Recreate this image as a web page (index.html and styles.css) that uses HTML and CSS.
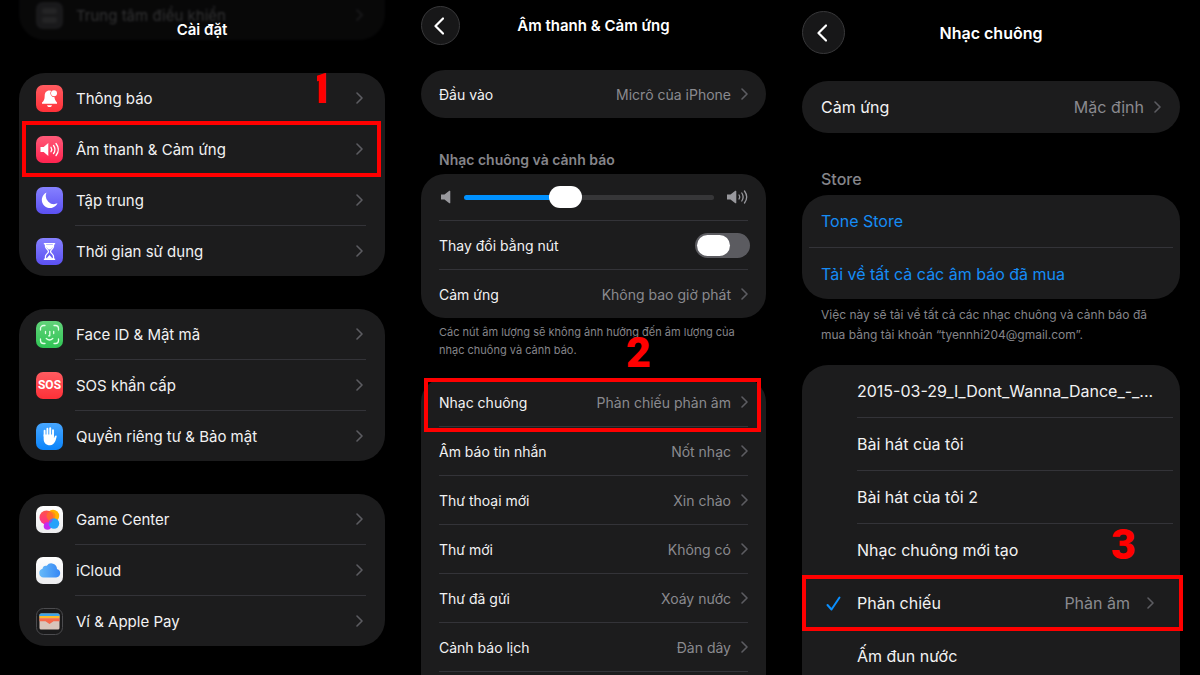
FILE: index.html
```html
<!DOCTYPE html>
<html lang="vi">
<head>
    <meta charset="UTF-8">
    <meta name="viewport" content="width=device-width, initial-scale=1.0">
    <title>Cài đặt nhạc chuông</title>
    <link rel="stylesheet" href="styles.css">
</head>
<body>
    <!-- shared icons -->
    <svg class="defs" aria-hidden="true">
        <symbol id="chevron" viewBox="0 0 7 12"><path d="M1 1l5 5-5 5" fill="none" stroke="currentColor" stroke-width="1.6" stroke-linecap="round" stroke-linejoin="round"/></symbol>
        <symbol id="back" viewBox="0 0 10 18"><path d="M9 1.5L1.5 9 9 16.500" fill="none" stroke="#fff" stroke-width="2.200" stroke-linecap="round" stroke-linejoin="round"/></symbol>
        <symbol id="check" viewBox="0 0 15 15"><path d="M1.500 9l4 4.500L13.500 1.500" fill="none" stroke="currentColor" stroke-width="2" stroke-linecap="round" stroke-linejoin="round"/></symbol>
        <linearGradient id="pinkred" x2="0" y2="1"><stop stop-color="#ff5b60"/><stop offset="1" stop-color="#ff3038"/></linearGradient>
        <linearGradient id="pink" x2="0" y2="1"><stop stop-color="#ff5a78"/><stop offset="1" stop-color="#ff234f"/></linearGradient>
        <linearGradient id="violet" x2="0" y2="1"><stop stop-color="#8681ff"/><stop offset="1" stop-color="#5b50f2"/></linearGradient>
        <linearGradient id="green" x2="0" y2="1"><stop stop-color="#62d37a"/><stop offset="1" stop-color="#2fc454"/></linearGradient>
        <linearGradient id="blue" x2="0" y2="1"><stop stop-color="#47a6ff"/><stop offset="1" stop-color="#0a84fb"/></linearGradient>
        <linearGradient id="white" x2="0" y2="1"><stop stop-color="#fff"/><stop offset="1" stop-color="#ececee"/></linearGradient>
        <linearGradient id="cloud" x2="1" y2="0"><stop stop-color="#67baf8"/><stop offset="1" stop-color="#3687f5"/></linearGradient>
        <linearGradient id="bubble" x1="0" y1="0" x2="0" y2="1"><stop stop-color="#ff5548"/><stop offset="1" stop-color="#ff2d92"/></linearGradient>
    </svg>

    <main class="screens">
        <section class="screen settings">
            <div class="ghost" aria-hidden="true">
                <svg class="icon" viewBox="0 0 27 27"><rect width="27" height="27" rx="7" fill="#55555a"/><rect x="6" y="6" width="15" height="6" rx="3" fill="#77777b"/><rect x="6" y="15" width="15" height="6" rx="3" fill="#77777b"/></svg>
                <span class="name">Trung tâm điều khiển</span>
                <svg class="chevron"><use href="#chevron"/></svg>
            </div>
            <header class="bar"><h1>Cài đặt</h1></header>

            <nav class="card">
                <a class="row" href="#">
                    <svg class="icon" viewBox="0 0 27 27"><rect width="27" height="27" rx="7" fill="url(#pinkred)"/><path d="M13.500 5.500c-3.300 0-4.800 2.300-4.800 5.200 0 3.800-1 5.300-2.700 6.900v1.100h15v-1.100c-1.600-1.600-2.300-3.200-2.500-5.300a4.200 4.200 0 0 1-3.400-6.600z" fill="#fff"/><circle cx="18" cy="8.300" r="3" fill="#fff"/><path d="M11 20.200h5c-.4 1.300-1.300 1.900-2.500 1.900s-2.100-.6-2.500-1.900z" fill="#fff"/></svg>
                    <span class="name">Thông báo</span>
                    <svg class="chevron"><use href="#chevron"/></svg>
                </a>
                <a class="row marked" href="#">
                    <svg class="icon" viewBox="0 0 27 27"><rect width="27" height="27" rx="7" fill="url(#pink)"/><path d="M4.500 11h3.200L12.300 7v13l-4.600-4H4.500z" fill="#fff"/><path d="M15 11.300c.9 1.300.9 3.100 0 4.400M17.500 9.500c1.800 2.400 1.800 5.600 0 8M20 7.500c2.900 3.700 2.900 8.300 0 12" fill="none" stroke="#fff" stroke-width="1.300" stroke-linecap="round"/></svg>
                    <span class="name">Âm thanh &amp; Cảm ứng</span>
                    <svg class="chevron"><use href="#chevron"/></svg>
                </a>
                <a class="row" href="#">
                    <svg class="icon" viewBox="0 0 27 27"><rect width="27" height="27" rx="7" fill="url(#violet)"/><path d="M10.500 5.500a8.200 8.200 0 1 0 11 10.800A8.300 8.300 0 0 1 10.500 5.500z" fill="#fff"/></svg>
                    <span class="name">Tập trung</span>
                    <svg class="chevron"><use href="#chevron"/></svg>
                </a>
                <a class="row" href="#">
                    <svg class="icon" viewBox="0 0 27 27"><rect width="27" height="27" rx="7" fill="url(#violet)"/><path d="M8.500 5.800h10M8.500 21.200h10" stroke="#fff" stroke-width="1.600" stroke-linecap="round"/><path d="M9.500 6v2.500c0 2.300 3 3.300 3 5s-3 2.700-3 5V21h8v-2.500c0-2.300-3-3.300-3-5s3-2.700 3-5V6" fill="none" stroke="#fff" stroke-width="1.300"/><path d="M10 7h7v2l-2.500 2.500h-2L10 9zM10.500 20.500l3-3.500 3 3.500z" fill="#fff"/></svg>
                    <span class="name">Thời gian sử dụng</span>
                    <svg class="chevron"><use href="#chevron"/></svg>
                </a>
            </nav>

            <nav class="card">
                <a class="row" href="#">
                    <svg class="icon" viewBox="0 0 27 27"><rect width="27" height="27" rx="7" fill="url(#green)"/><g fill="none" stroke="#e4ffe9" stroke-width="1.300" stroke-linecap="round" stroke-linejoin="round"><path d="M4.500 9V7.500a3 3 0 0 1 3-3H9M18 4.500h1.500a3 3 0 0 1 3 3V9M22.500 18v1.500a3 3 0 0 1-3 3H18M9 22.500H7.500a3 3 0 0 1-3-3V18M9.500 10.500v2M17.700 10.500v2M13.800 10.500v4.300h-1.200M10.300 17.500c1.900 1.700 4.600 1.700 6.500 0"/></g></svg>
                    <span class="name">Face ID &amp; Mật mã</span>
                    <svg class="chevron"><use href="#chevron"/></svg>
                </a>
                <a class="row" href="#">
                    <span class="icon sos">SOS</span>
                    <span class="name">SOS khẩn cấp</span>
                    <svg class="chevron"><use href="#chevron"/></svg>
                </a>
                <a class="row" href="#">
                    <svg class="icon" viewBox="0 0 27 27"><rect width="27" height="27" rx="7" fill="url(#blue)"/><path d="M8.600 13V7.800M11.400 12V5.800M14.200 12V5.300M17 13V7.300" stroke="#fff" stroke-width="1.900" stroke-linecap="round"/><path d="M7.650 11.500h10.300v3.800l1-2.200c.5-1 2-.7 1.700.5-.7 3.500-2 8.600-6.600 8.600-4.200 0-6.400-2.500-6.400-6.500z" fill="#fff"/></svg>
                    <span class="name">Quyền riêng tư &amp; Bảo mật</span>
                    <svg class="chevron"><use href="#chevron"/></svg>
                </a>
            </nav>

            <nav class="card">
                <a class="row" href="#">
                    <svg class="icon" viewBox="0 0 27 27"><rect width="27" height="27" rx="7" fill="url(#white)"/><circle cx="17" cy="10" r="6.200" fill="#ffb300"/><circle cx="10.500" cy="11.500" r="7" fill="url(#bubble)"/><circle cx="15" cy="10" r="4.500" fill="#ff7a1c" opacity=".7"/><circle cx="11.500" cy="20" r="3.800" fill="#c32bf0"/><circle cx="18" cy="17.500" r="5.200" fill="#27a2fa"/><path d="M13 16a5.200 5.200 0 0 1 4-3.500 7 7 0 0 1-4 5.500z" fill="#7b60e8"/></svg>
                    <span class="name">Game Center</span>
                    <svg class="chevron"><use href="#chevron"/></svg>
                </a>
                <a class="row" href="#">
                    <svg class="icon" viewBox="0 0 27 27"><rect width="27" height="27" rx="7" fill="url(#white)"/><path d="M7.500 20.500a4.500 4.500 0 0 1-1-8.800 3.600 3.600 0 0 1 4.300-2.900 5.600 5.600 0 0 1 10.200 3.100 4.400 4.400 0 0 1-.8 8.600z" fill="url(#cloud)"/></svg>
                    <span class="name">iCloud</span>
                    <svg class="chevron"><use href="#chevron"/></svg>
                </a>
                <a class="row" href="#">
                    <svg class="icon" viewBox="0 0 27 27"><rect x=".5" y=".5" width="26" height="26" rx="7" fill="#1a1a1b" stroke="#4b4b4e"/><rect x="3.500" y="5.500" width="20" height="16" rx="1.500" fill="#d9c5bb"/><path d="M3.500 7a1.500 1.500 0 0 1 1.500-1.500h17A1.500 1.500 0 0 1 23.500 7v1h-20z" fill="#3ba3e8"/><path d="M3.500 8h20v2.300h-20z" fill="#fcb827"/><path d="M3.500 10.300h20v3h-6l-4 2.700-4-2.700h-6z" fill="#f5694c"/></svg>
                    <span class="name">Ví &amp; Apple Pay</span>
                    <svg class="chevron"><use href="#chevron"/></svg>
                </a>
            </nav>
            <span class="step step-1">1</span>
        </section>

        <section class="screen sounds">
            <header class="bar">
                <button class="back" type="button" aria-label="Quay lại"><svg><use href="#back"/></svg></button>
                <h1>Âm thanh &amp; Cảm ứng</h1>
            </header>

            <nav class="card">
                <a class="row" href="#"><span class="name">Đầu vào</span><span class="value">Micrô của iPhone</span><svg class="chevron"><use href="#chevron"/></svg></a>
            </nav>

            <h2 id="volume-title">Nhạc chuông và cảnh báo</h2>
            <div class="card">
                <div class="row volume">
                    <svg class="mute" viewBox="0 0 10 14"><path d="M0 4.500h3.500L8.300.8q1-.5 1 .5v11.400q0 1-1 .5L3.500 9.500H0z" fill="#98989d"/></svg>
                    <input class="slider" type="range" min="0" max="100" value="39" aria-labelledby="volume-title">
                    <svg class="loud" viewBox="0 0 21 14"><path d="M0 4.500h3.500L8.300.8q1-.5 1 .5v11.400q0 1-1 .5L3.500 9.500H0z" fill="#98989d"/><path d="M12 5c.8 1.200.8 2.800 0 4M14.800 3c1.600 2.400 1.600 5.600 0 8M17.500 1c2.700 3.700 2.700 8.300 0 12" fill="none" stroke="#98989d" stroke-width="1.300" stroke-linecap="round"/></svg>
                </div>
                <div class="row">
                    <label class="name" for="by-button">Thay đổi bằng nút</label>
                    <input class="switch" type="checkbox" id="by-button">
                </div>
                <a class="row" href="#"><span class="name">Cảm ứng</span><span class="value">Không bao giờ phát</span><svg class="chevron"><use href="#chevron"/></svg></a>
            </div>
            <p class="note">Các nút âm lượng sẽ không ảnh hưởng đến âm lượng của nhạc chuông và cảnh báo.</p>

            <nav class="card">
                <a class="row marked" href="#"><span class="name">Nhạc chuông</span><span class="value">Phản chiếu phản âm</span><svg class="chevron"><use href="#chevron"/></svg></a>
                <a class="row" href="#"><span class="name">Âm báo tin nhắn</span><span class="value">Nốt nhạc</span><svg class="chevron"><use href="#chevron"/></svg></a>
                <a class="row" href="#"><span class="name">Thư thoại mới</span><span class="value">Xin chào</span><svg class="chevron"><use href="#chevron"/></svg></a>
                <a class="row" href="#"><span class="name">Thư mới</span><span class="value">Không có</span><svg class="chevron"><use href="#chevron"/></svg></a>
                <a class="row" href="#"><span class="name">Thư đã gửi</span><span class="value">Xoáy nước</span><svg class="chevron"><use href="#chevron"/></svg></a>
                <a class="row" href="#"><span class="name">Cảnh báo lịch</span><span class="value">Đàn dây</span><svg class="chevron"><use href="#chevron"/></svg></a>
                <div class="row"></div>
            </nav>
            <span class="step step-2">2</span>
        </section>

        <section class="screen ringtone">
            <header class="bar">
                <button class="back" type="button" aria-label="Quay lại"><svg><use href="#back"/></svg></button>
                <h1>Nhạc chuông</h1>
            </header>

            <nav class="card">
                <a class="row" href="#"><span class="name">Cảm ứng</span><span class="value">Mặc định</span><svg class="chevron"><use href="#chevron"/></svg></a>
            </nav>

            <h2>Store</h2>
            <nav class="card store">
                <a class="row" href="#">Tone Store</a>
                <a class="row" href="#">Tải về tất cả các âm báo đã mua</a>
            </nav>
            <p class="note">Việc này sẽ tải về tất cả các nhạc chuông và cảnh báo đã mua bằng tài khoản “tyennhi204@gmail.com”.</p>

            <div class="card tones">
                <label class="row"><input type="radio" name="tone"><svg class="check"><use href="#check"/></svg><span class="name">2015-03-29_I_Dont_Wanna_Dance_-_...</span></label>
                <label class="row"><input type="radio" name="tone"><svg class="check"><use href="#check"/></svg><span class="name">Bài hát của tôi</span></label>
                <label class="row"><input type="radio" name="tone"><svg class="check"><use href="#check"/></svg><span class="name">Bài hát của tôi 2</span></label>
                <label class="row"><input type="radio" name="tone"><svg class="check"><use href="#check"/></svg><span class="name">Nhạc chuông mới tạo</span></label>
                <label class="row marked"><input type="radio" name="tone" checked><svg class="check"><use href="#check"/></svg><span class="name">Phản chiếu</span><span class="value">Phản âm</span><svg class="chevron"><use href="#chevron"/></svg></label>
                <label class="row"><input type="radio" name="tone"><svg class="check"><use href="#check"/></svg><span class="name">Ấm đun nước</span></label>
                <div class="row"></div>
            </div>
            <span class="step step-3">3</span>
        </section>
    </main>
</body>
</html>
```

FILE: styles.css
```css
*{
    box-sizing: border-box;
}
body{
    margin: 0;
    height: 100vh;
    overflow: hidden;
    background: #000;
    color: #f2f2f3;
    font-family: Inter, Roboto, sans-serif;
}
h1,h2,p{
    margin: 0;
}
.defs{
    position: absolute;
    width: 0;
    height: 0;
}
.screens{
    display: grid;
    grid-template-columns: 366fr 345fr 378fr;
    gap: 36px;
    padding: 0 20px 0 19px;
}

/* each phone screen was scaled differently, so the sizes differ too */
.screen{
    position: relative;
    display: flex;
    flex-direction: column;
    font-size: 15px;
}
.settings{
    --row: 50px;
    --left: 17px;
    --right: 22px;
    --line-left: 56px;
    --line-right: 19px;
    --radius: 26px;
    gap: 33px;
}
.sounds{
    --row: 48px;
    --left: 18px;
    --right: 18px;
    --line-left: 18px;
    --line-right: 18px;
    --radius: 24px;
    font-size: 14px;
}
.ringtone{
    --row: 52px;
    --left: 19px;
    --right: 19px;
    --line-left: 7px;
    --line-right: 7px;
    --radius: 26px;
    font-size: 16px;
}

/* top bars */
.bar{
    position: relative;
    display: grid;
    grid-template-columns: 1fr auto 1fr;
    align-items: center;
}
.bar h1{
    grid-column: 2;
    font-size: 15px;
    line-height: 20px;
    font-weight: 600;
    color: #fff;
}
.settings .bar{
    height: 40px;
    padding-top: 20px;
}
.sounds .bar{
    height: 70px;
    padding: 6px 0 25px;
}
.ringtone .bar{
    height: 81px;
    padding: 11px 0 27px;
}
.ringtone .bar h1{
    font-size: 16px;
}
.back{
    display: flex;
    align-items: center;
    justify-content: center;
    width: 39px;
    height: 39px;
    padding: 0 3px 0 0;
    border: 1px solid #38383a;
    border-radius: 50%;
    background: #171718;
}
.back svg{
    width: 10px;
    height: 18px;
}
.ringtone .back{
    width: 43px;
    height: 43px;
}

/* the row that scrolls away under the title */
.ghost{
    position: absolute;
    top: -10px;
    left: 0;
    right: 0;
    height: 50px;
    display: flex;
    align-items: center;
    gap: 13px;
    padding: 0 22px 0 17px;
    border-radius: 0 0 26px 26px;
    background: #1c1c1d;
    color: #a0a0a4;
    opacity: 0.3;
    filter: blur(1px);
}

/* cards and rows */
.card{
    border-radius: var(--radius);
    background: #1c1c1d;
}
.row{
    position: relative;
    display: flex;
    align-items: center;
    height: var(--row);
    padding: 0 var(--right) 0 var(--left);
    color: inherit;
    text-decoration: none;
    white-space: nowrap;
}
.row + .row{
    height: calc(var(--row) + 1px);
    padding-top: 1px;
}
.row + .row::before{
    content: "";
    position: absolute;
    top: 0;
    left: var(--line-left);
    right: var(--line-right);
    height: 1px;
    background: #333338;
}
.name{
    flex: 1;
}
.value{
    color: #8a8a8f;
}
.chevron{
    width: 7px;
    height: 12px;
    margin-left: 10px;
    color: #5c5c61;
}
.icon{
    width: 27px;
    height: 27px;
}
.settings .row{
    gap: 13px;
}
.sos{
    display: flex;
    align-items: center;
    justify-content: center;
    border-radius: 7px;
    background: linear-gradient(#ff5b60,#ff3038);
    color: #fff;
    font-family: Roboto, sans-serif;
    font-size: 12px;
    font-weight: 700;
}
h2{
    font-size: 14px;
    line-height: 20px;
    font-weight: 600;
    color: #85858a;
}
.note{
    color: #85858a;
}
.sounds h2{
    padding: 32px 18px 4px;
}
.sounds .note{
    padding: 5px 18px 19px;
    font-size: 11px;
    line-height: 18px;
}

/* volume slider */
.sounds .volume{
    height: 46px;
    gap: 13px;
    padding-left: 20px;
}
.mute{
    width: 10px;
    height: 14px;
}
.loud{
    width: 21px;
    height: 14px;
}
.slider{
    flex: 1;
    min-width: 0;
    height: 22px;
    margin: 0;
    appearance: none;
    background: none;
}
.slider::-webkit-slider-runnable-track{
    height: 5px;
    border-radius: 3px;
    background: linear-gradient(90deg,#0091ff 40%,#363638 40%);
}
.slider::-webkit-slider-thumb{
    appearance: none;
    width: 33px;
    height: 22px;
    margin-top: -9px;
    border-radius: 11px;
    background: #fff;
}

.switch{
    appearance: none;
    width: 55px;
    height: 25px;
    margin: 0 -2px 0 0;
    padding: 2px;
    border-radius: 13px;
    background: #5b5b60;
}
.switch::before{
    content: "";
    display: block;
    width: 33px;
    height: 21px;
    border-radius: 11px;
    background: #fff;
}
.switch:checked{
    background: #30d158;
}
.switch:checked::before{
    margin-left: 18px;
}

/* ringtone screen */
.ringtone h2{
    padding: 36px 19px 6px;
    font-size: 16px;
    font-weight: 500;
}
.ringtone .note{
    padding: 6px 19px 20px;
    font-size: 12px;
    line-height: 20px;
}
.store{
    color: #168cf5;
}
.store .row + .row{
    height: var(--row);
}
.tones{
    --left: 24px;
    --right: 26px;
    --line-left: 55px;
}
.tones input{
    position: absolute;
    opacity: 0;
}
.check{
    width: 15px;
    height: 15px;
    margin-right: 16px;
    color: #0a8fff;
    visibility: hidden;
}
.tones input:checked + .check{
    visibility: visible;
}
.tones .chevron{
    margin-left: 17px;
}

/* tutorial marks drawn over the screens */
.marked::after{
    content: "";
    position: absolute;
    z-index: 1;
    border: 4px solid #f00;
}
.settings .marked::after{
    inset: -2px 4px -3px 3px;
}
.sounds .marked::after{
    inset: 0 5px -6px 3px;
}
.ringtone .marked::after{
    inset: -1px -3px -2px 0;
}
.step{
    position: absolute;
    z-index: 2;
    color: #f00;
    font-family: Roboto, sans-serif;
    font-size: 43px;
    line-height: 43px;
    font-weight: 900;
}
/* only the stem of the one is shown */
.step-1{
    top: 67px;
    right: 52px;
    clip-path: inset(0 0 0 9px);
}
.step-2{
    top: 331px;
    left: 205px;
}
.step-3{
    top: 523px;
    right: 44px;
}
```
